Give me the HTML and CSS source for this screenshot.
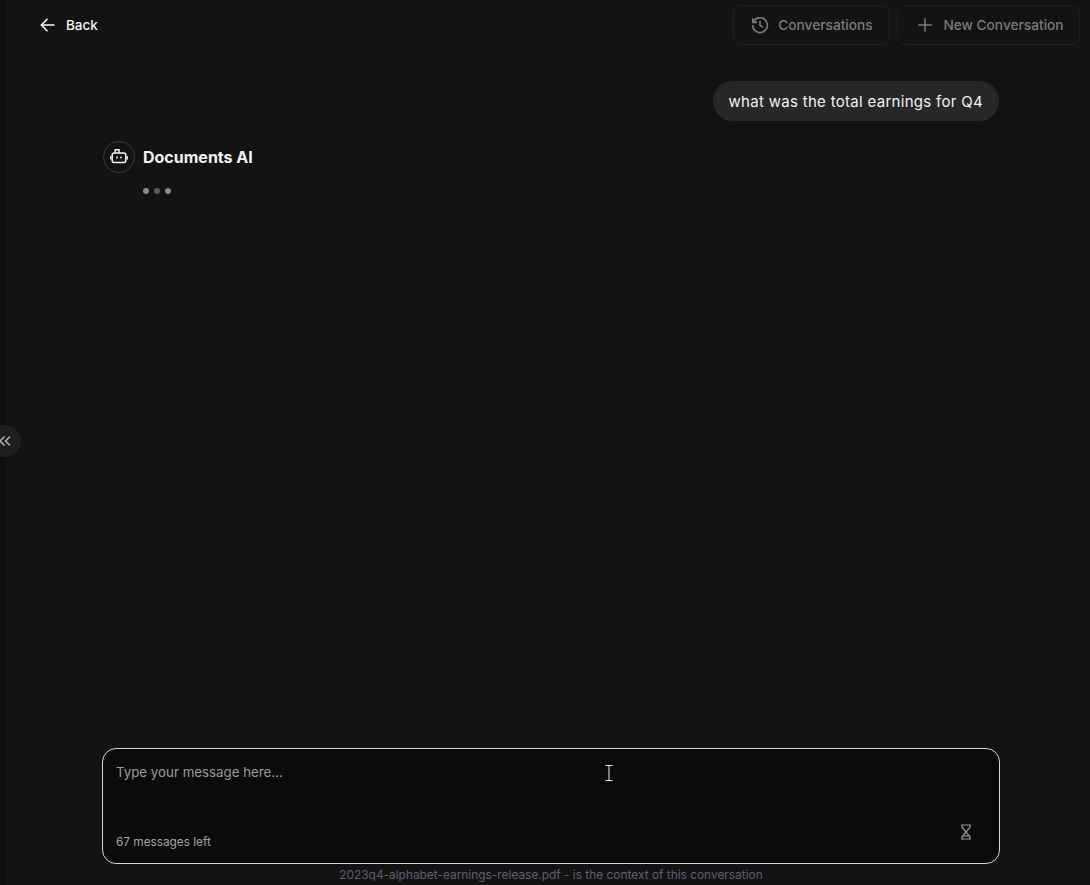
FILE: index.html
```html
<!DOCTYPE html>
<html lang="en">
<head>
    <meta charset="UTF-8">
    <meta name="viewport" content="width=device-width, initial-scale=1.0">
    <title>Documents AI</title>
    <link rel="stylesheet" href="styles.css">
</head>
<body>
    <div class="side-strip"></div>
    <button class="collapse-handle" aria-label="Expand sidebar">
        <svg width="14" height="14" viewBox="0 0 14 14" fill="none" stroke="#b4b4b4" stroke-width="1.5">
            <path d="M6.5 2.5 2 7l4.5 4.5"/>
            <path d="M12 2.5 7.5 7l4.5 4.5"/>
        </svg>
    </button>

    <div class="main">
        <header class="top-bar">
            <a class="back-link" href="#">
                <svg width="20" height="20" viewBox="0 0 20 20" fill="none" stroke="#f2f2f2" stroke-width="1.6">
                    <path d="M16.5 10H3.5"/>
                    <path d="M9.5 3.8 3.4 10l6.1 6.2"/>
                </svg>
                Back
            </a>
            <div class="top-actions">
                <button class="ghost-btn btn-history">
                    <svg width="20" height="20" viewBox="0 0 20 20" fill="none" stroke="#7b7b7b" stroke-width="1.6">
                        <path d="M3.2 7.2A7.4 7.4 0 1 1 2.6 10"/>
                        <path d="M2.8 3.2v4.2H7"/>
                        <path d="M10 6v4.4l3 1.8"/>
                    </svg>
                    Conversations
                </button>
                <button class="ghost-btn btn-new">
                    <svg width="20" height="20" viewBox="0 0 20 20" fill="none" stroke="#7b7b7b" stroke-width="1.5">
                        <path d="M10 3.2v13.6"/>
                        <path d="M3.2 10h13.6"/>
                    </svg>
                    New Conversation
                </button>
            </div>
        </header>

        <section class="chat">
            <div class="user-row">
                <div class="user-bubble">what was the total earnings for Q4</div>
            </div>
            <div class="bot-head">
                <div class="bot-avatar">
                    <svg width="18" height="18" viewBox="0 0 18 18" fill="none" stroke="#f2f2f2" stroke-width="1.5">
                        <rect x="2.2" y="5" width="13.6" height="9.6" rx="2"/>
                        <path d="M5.2 5V1.8H9V5"/>
                        <path d="M0.8 8.2v3.4M17.2 8.2v3.4"/>
                        <path d="M7 8.4v2.2M11 8.4v2.2"/>
                    </svg>
                </div>
                <span class="bot-name">Documents AI</span>
            </div>
            <div class="typing-dots">
                <span class="dot"></span>
                <span class="dot dim"></span>
                <span class="dot"></span>
            </div>
        </section>

        <form class="composer">
            <div class="composer-text">Type your message here...</div>
            <div class="composer-foot">
                <span class="msg-count">67 messages left</span>
                <svg class="hourglass" width="12" height="16" viewBox="0 0 12 16" fill="none" stroke="#9a9a9a" stroke-width="1.2">
                    <path d="M1 1h10M1 15h10"/>
                    <path d="M2 1v2.2L10 12.8V15M10 1v2.2L2 12.8V15"/>
                    <path d="M3.4 12h5.2"/>
                </svg>
            </div>
            <svg class="text-cursor" width="8" height="16" viewBox="0 0 8 16" fill="none" stroke="#f0f0f0" stroke-width="1">
                <path d="M0.5 0.5h7M0.5 15.5h7M4 0.5v15"/>
            </svg>
        </form>
        <p class="context-note">2023q4-alphabet-earnings-release.pdf - is the context of this conversation</p>
    </div>
</body>
</html>
```

FILE: styles.css
```css
* {
    box-sizing: border-box;
}
html, body {
    height: 100%;
}
body {
    font-family: Inter, "Noto Sans", Arial, sans-serif;
    margin: 0;
    display: flex;
    height: 885px;
    overflow: hidden;
    background-color: #131313;
    color: #f2f2f2;
}
.side-strip {
    width: 5px;
    flex-shrink: 0;
    background-color: #0e0e0e;
}
.collapse-handle {
    position: absolute;
    left: -11px;
    top: 425px;
    width: 32px;
    height: 32px;
    padding: 0;
    display: flex;
    align-items: center;
    justify-content: center;
    border: none;
    border-radius: 50%;
    background-color: #1f1f1f;
}
.main {
    flex: 1;
    display: flex;
    flex-direction: column;
    min-width: 0;
}
.top-bar {
    height: 50px;
    padding: 5px 10px 5px 33px;
    display: flex;
    justify-content: space-between;
    align-items: center;
}
.back-link {
    display: flex;
    align-items: center;
    gap: 8px;
    color: #f2f2f2;
    text-decoration: none;
    font-size: 13.5px;
    font-weight: 500;
}
.top-actions {
    display: flex;
    gap: 7px;
}
.ghost-btn {
    height: 40px;
    display: flex;
    align-items: center;
    gap: 8px;
    border: 1px solid #1f1f1f;
    border-radius: 8px;
    background-color: transparent;
    color: #7b7b7b;
    font-family: inherit;
    font-size: 13.7px;
    font-weight: 500;
    padding: 0;
    justify-content: center;
}
.btn-history {
    width: 157px;
}
.btn-new {
    width: 183px;
    padding-left: 2px;
}
.chat {
    flex: 1;
    padding: 31px 91px 0 98px;
}
.user-row {
    display: flex;
    justify-content: flex-end;
}
.user-bubble {
    height: 40px;
    line-height: 41px;
    padding: 0 16px;
    border-radius: 20px;
    background-color: #272727;
    font-size: 15px;
    letter-spacing: 0.3px;
    white-space: nowrap;
}
.bot-head {
    display: flex;
    align-items: center;
    gap: 8px;
    margin-top: 20px;
}
.bot-avatar {
    width: 32px;
    height: 32px;
    display: flex;
    align-items: center;
    justify-content: center;
    border: 1px solid #3a3a3a;
    border-radius: 50%;
}
.bot-name {
    font-size: 16px;
    font-weight: 700;
}
.typing-dots {
    display: flex;
    gap: 5px;
    margin: 15px 0 0 40px;
}
.dot {
    width: 6px;
    height: 6px;
    border-radius: 50%;
    background-color: #8a8a8a;
}
.dot.dim {
    background-color: #5c5c5c;
}
.composer {
    position: relative;
    width: 898px;
    height: 116px;
    margin-left: 97px;
    padding: 15px 13px 14px;
    display: flex;
    flex-direction: column;
    justify-content: space-between;
    border: 1px solid #d6d6d6;
    border-radius: 14px;
    background-color: #0b0b0b;
}
.composer-text {
    font-size: 13.3px;
    color: #9a9a9a;
}
.composer-foot {
    display: flex;
    justify-content: space-between;
    align-items: flex-end;
}
.msg-count {
    font-size: 11.8px;
    color: #a3a3a3;
}
.hourglass {
    margin: 0 14px 9px 0;
}
.text-cursor {
    position: absolute;
    left: 502px;
    top: 16px;
}
.context-note {
    margin: 3px 0;
    height: 15px;
    line-height: 15px;
    text-align: center;
    font-size: 11.9px;
    color: #5f6070;
    padding-left: 7px;
}
```
